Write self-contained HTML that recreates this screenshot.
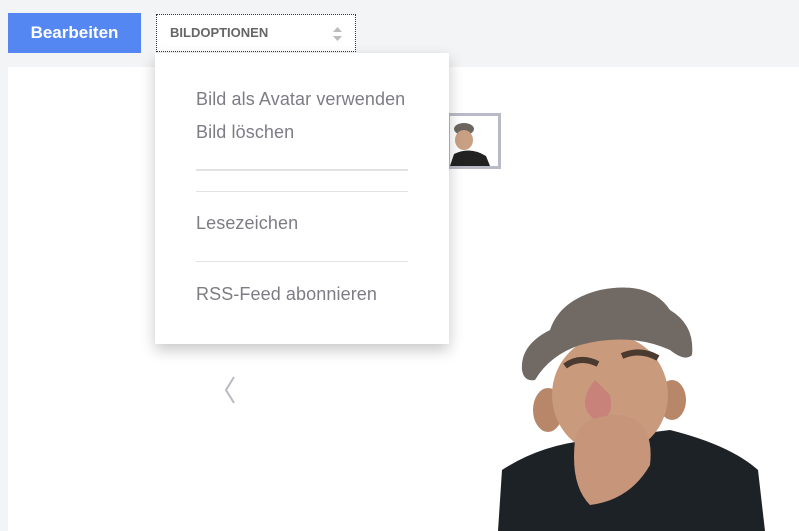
<!DOCTYPE html>
<html><head><style>
body{margin:0;width:799px;height:531px;overflow:hidden;background:#f3f4f6;font-family:"Liberation Sans",sans-serif;position:relative}
.abs{position:absolute}
.panel{left:8px;top:67px;width:791px;height:464px;background:#fff}
.btn{left:8px;top:13px;width:133px;height:40px;background:#5587f2;color:#fff;font-weight:bold;font-size:17px;line-height:40px;text-align:center}
.sel{left:156px;top:14px;width:198px;height:36px;border:1px dotted #333;background:#fff;font-size:13px;font-weight:bold;color:#666;line-height:36px;box-sizing:content-box}
.dd{left:155px;top:53px;width:294px;height:291px;background:#fff;box-shadow:0 6px 14px rgba(0,0,0,.22)}
.it{position:absolute;left:41px;font-size:18px;letter-spacing:0.1px;color:#7d7c85;white-space:nowrap}
.ln{position:absolute;left:41px;width:212px;height:1px;background:#e2e2e4}
</style></head><body>
<div class="abs panel"></div>
<div class="abs btn">Bearbeiten</div>
<div class="abs" style="left:447px;top:113px;width:48px;height:50px;border:3px solid #b9bac8;background:#fff;overflow:hidden">
<svg width="48" height="50"><ellipse cx="14" cy="13" rx="10" ry="6" fill="#6b6660"/><ellipse cx="14" cy="24" rx="9" ry="10" fill="#c9a084"/><path d="M0 50 L4 38 Q20 30 36 40 L40 50Z" fill="#222"/></svg></div>
<div class="abs sel"><span style="margin-left:13px">BILDOPTIONEN</span>
<svg class="abs" style="left:175px;top:12px" width="11" height="14"><path d="M1 5 L5.5 0 L10 5Z M1 9 L5.5 14 L10 9Z" fill="#bbb"/></svg></div>
<div class="abs dd">
<div class="it" style="top:36px">Bild als Avatar verwenden</div>
<div class="it" style="top:69px">Bild löschen</div>
<div class="ln" style="top:116px;height:2px"></div>
<div class="ln" style="top:138px"></div>
<div class="it" style="top:160px">Lesezeichen</div>
<div class="ln" style="top:208px"></div>
<div class="it" style="top:231px">RSS-Feed abonnieren</div>
</div>
<svg class="abs" style="left:222px;top:375px" width="16" height="30"><path d="M12 2 L4 15 L12 28" stroke="#b8b9c6" stroke-width="2" fill="none"/></svg>
<svg class="abs" style="left:480px;top:270px" width="319" height="261">
<path d="M18 261 L22 200 Q60 175 110 170 L190 160 Q250 175 278 200 L285 261Z" fill="#1d2226"/>
<ellipse cx="68" cy="140" rx="15" ry="22" fill="#b8876a"/>
<ellipse cx="192" cy="130" rx="14" ry="20" fill="#b8876a"/>
<ellipse cx="130" cy="125" rx="58" ry="60" fill="#c99a7c"/>
<path d="M85 96 Q100 85 118 94" stroke="#4a3a30" stroke-width="6" fill="none"/>
<path d="M142 86 Q160 78 178 88" stroke="#4a3a30" stroke-width="6" fill="none"/>
<path d="M115 110 Q95 135 115 150 Q135 150 130 125Z" fill="#c9827a"/>
<path d="M95 170 Q100 145 140 145 Q175 150 170 195 Q150 230 110 235 Q90 215 95 170Z" fill="#c6957a"/>
<path d="M42 100 Q40 75 70 60 Q80 30 120 20 Q170 10 190 40 Q215 55 212 85 Q205 92 190 80 Q150 62 100 75 Q70 85 55 110 Q44 112 42 100Z" fill="#716a64"/>
</svg>
</body></html>
